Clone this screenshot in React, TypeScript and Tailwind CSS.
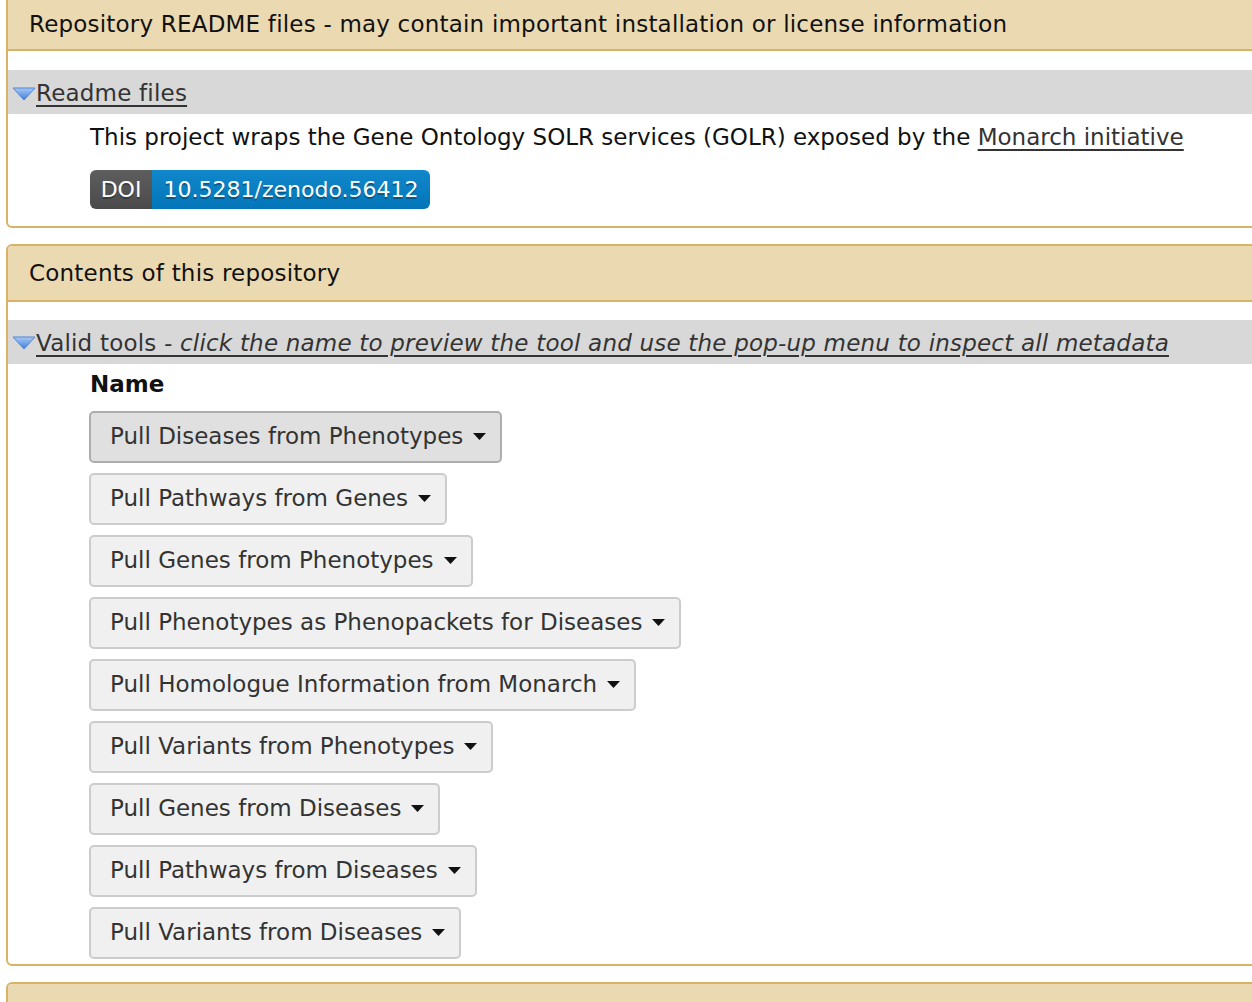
import React from 'react';

const tools = [
  'Pull Diseases from Phenotypes',
  'Pull Pathways from Genes',
  'Pull Genes from Phenotypes',
  'Pull Phenotypes as Phenopackets for Diseases',
  'Pull Homologue Information from Monarch',
  'Pull Variants from Phenotypes',
  'Pull Genes from Diseases',
  'Pull Pathways from Diseases',
  'Pull Variants from Diseases',
];

const Triangle: React.FC = () => (
  <svg width="24" height="14" viewBox="0 0 24 14" className="shrink-0">
    <defs>
      <linearGradient id="tri" x1="0" y1="0" x2="0" y2="1">
        <stop offset="0" stopColor="#a9c8f2" />
        <stop offset="1" stopColor="#3f7fdc" />
      </linearGradient>
    </defs>
    <path d="M1 1 L23 1 L12 13 Z" fill="url(#tri)" stroke="#4d86d6" strokeWidth="1" strokeLinejoin="round" />
  </svg>
);

const Caret: React.FC = () => (
  <svg width="13" height="8" viewBox="0 0 13 8" className="ml-[10px] shrink-0">
    <path d="M0 0 L13 0 L6.5 7 Z" fill="#111" />
  </svg>
);

const PanelHeader: React.FC<{ children: React.ReactNode; className?: string }> = ({ children, className }) => (
  <div className={`bg-[#ebd9b2] border-b-2 border-[#d8b266] pl-[21px] flex items-center tracking-[0.2px] ${className ?? ''}`}>
    {children}
  </div>
);

const ToggleBar: React.FC<{ children: React.ReactNode }> = ({ children }) => (
  <div className="bg-[#d8d8d8] h-[44px] flex items-center pl-[4px] pt-[3px]">
    <Triangle />
    <span className="underline underline-offset-[4px] decoration-[2px] text-[#333] whitespace-nowrap tracking-[0.2px]">{children}</span>
  </div>
);

export default function App() {
  return (
    <div className="min-h-screen bg-white overflow-hidden text-[23px] text-[#111] leading-tight" style={{ fontFamily: '"DejaVu Sans", "Liberation Sans", sans-serif' }}>
      <div className="w-[1320px] ml-[6px] -mt-[6px] flex flex-col gap-[16px]">
        <section className="border-2 border-[#d8b266] rounded-[6px] overflow-hidden">
          <PanelHeader className="h-[55px] pt-[3px]">
            Repository README files - may contain important installation or license information
          </PanelHeader>
          <div className="pt-[19px] pb-[17px]">
            <ToggleBar>Readme files</ToggleBar>
            <div className="pl-[82px] pt-[9px]">
              <p className="whitespace-nowrap">
                This project wraps the Gene Ontology SOLR services (GOLR) exposed by the{' '}
                <span className="underline underline-offset-[4px] decoration-[2px] text-[#333]">Monarch initiative</span>
              </p>
              <div className="mt-[18px] inline-flex h-[39px] rounded-[6px] overflow-hidden text-white text-[22px] font-medium [text-shadow:0_2px_0_rgba(0,0,0,0.3)]">
                <span className="bg-gradient-to-b from-[#5e5e5e] to-[#4a4a4a] w-[62px] flex items-center justify-center">DOI</span>
                <span className="bg-gradient-to-b from-[#1188cc] to-[#0275b8] w-[278px] flex items-center justify-center">10.5281/zenodo.56412</span>
              </div>
            </div>
          </div>
        </section>

        <section className="border-2 border-[#d8b266] rounded-[6px] overflow-hidden">
          <PanelHeader className="h-[56px] pt-[1px]">Contents of this repository</PanelHeader>
          <div className="pt-[18px] pb-[5px]">
            <ToggleBar>
              Valid tools <em>- click the name to preview the tool and use the pop-up menu to inspect all metadata</em>
            </ToggleBar>
            <div className="pl-[81px] pt-[2px]">
              <div className="font-bold pl-[1px] h-[38px] flex items-center">Name</div>
              <div className="flex flex-col items-start gap-[10px] mt-[7px]">
                {tools.map((t, i) => (
                  <button
                    key={t}
                    className={`h-[52px] pl-[19px] pr-[14px] flex items-center rounded-[5px] border-2 text-[#333] whitespace-nowrap ${
                      i === 0 ? 'bg-[#e0e0e0] border-[#adadad]' : 'bg-[#f0f0f0] border-[#cccccc]'
                    }`}
                  >
                    {t}
                    <Caret />
                  </button>
                ))}
              </div>
            </div>
          </div>
        </section>

        <section className="border-2 border-[#d8b266] rounded-[6px] overflow-hidden">
          <PanelHeader className="h-[60px]">Tools</PanelHeader>
        </section>
      </div>
    </div>
  );
}
